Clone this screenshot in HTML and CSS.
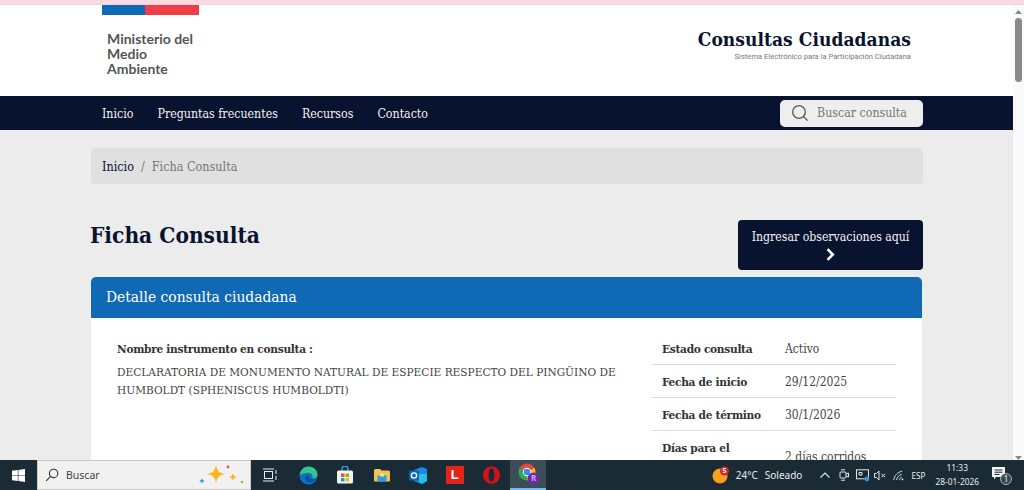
FILE: index.html
```html
<!DOCTYPE html>
<html lang="es">
<head>
<meta charset="utf-8">
<title>Ficha Consulta</title>
<link rel="stylesheet" href="styles.css">
</head>
<body>
<div class="tabstrip"></div>
<div class="viewport">
  <div class="page">
    <header class="site-head">
      <div class="brand">
        <div class="flag"><span class="flag-blue"></span><span class="flag-red"></span></div>
        <div class="ministry">Ministerio del<br>Medio<br>Ambiente</div>
      </div>
      <div class="site-title">
        <div class="site-name">Consultas Ciudadanas</div>
        <div class="site-sub">Sistema Electrónico para la Participación Ciudadana</div>
      </div>
    </header>
    <nav class="nav">
      <div class="nav-links">
        <a>Inicio</a><a>Preguntas frecuentes</a><a>Recursos</a><a>Contacto</a>
      </div>
      <div class="search">
        <svg width="18" height="18" viewBox="0 0 18 18" fill="none" stroke="#555" stroke-width="1.3"><circle cx="8" cy="8" r="6.3"/><path d="M12.6 12.6 16.6 16.6"/></svg>
        <span>Buscar consulta</span>
      </div>
    </nav>
    <main class="content">
      <div class="breadcrumb"><a>Inicio</a><span class="sep">/</span><span class="crumb-now">Ficha Consulta</span></div>
      <div class="title-row">
        <h1>Ficha Consulta</h1>
        <a class="cta">Ingresar observaciones aquí
          <svg class="cta-arrow" width="9" height="13" viewBox="0 0 9 13" fill="none" stroke="#fff" stroke-width="2.6"><path d="M1.5 1.2 6.8 6.5 1.5 11.8"/></svg>
        </a>
      </div>
      <section class="card">
        <div class="card-head">Detalle consulta ciudadana</div>
        <div class="card-body">
          <div class="col-main">
            <div class="field-label">Nombre instrumento en consulta :</div>
            <p class="field-text">DECLARATORIA DE MONUMENTO NATURAL DE ESPECIE RESPECTO DEL PINGÜINO DE HUMBOLDT (SPHENISCUS HUMBOLDTI)</p>
          </div>
          <div class="col-side">
            <div class="row"><b>Estado consulta</b><span>Activo</span></div>
            <div class="row"><b>Fecha de inicio</b><span>29/12/2025</span></div>
            <div class="row"><b>Fecha de término</b><span>30/1/2026</span></div>
            <div class="row row-tall"><b>Días para el término</b><span>2 días corridos</span></div>
          </div>
        </div>
      </section>
    </main>
  </div>
  <div class="scrollbar">
    <svg width="7" height="4" viewBox="0 0 7 4"><path d="M0 4 3.5 0 7 4z" fill="#8a8a8a"/></svg>
    <div class="thumb"></div>
    <svg class="arrow-down" width="7" height="4" viewBox="0 0 7 4"><path d="M0 0 3.5 4 7 0z" fill="#8a8a8a"/></svg>
  </div>
</div>
<footer class="taskbar">
  <div class="start">
    <svg width="13" height="13" viewBox="0 0 13 13" fill="#fff"><path d="M0 1.8 5.8 1v5.2H0zM6.4.9 13 0v6.2H6.4zM0 6.8h5.8V12L0 11.2zM6.4 6.8H13V13l-6.6-.9z"/></svg>
  </div>
  <div class="tb-search">
    <svg width="14" height="14" viewBox="0 0 14 14" fill="none" stroke="#333" stroke-width="1.1"><circle cx="8.6" cy="5.4" r="4.2"/><path d="M5.6 8.4 1.2 12.8"/></svg>
    <span class="tb-search-text">Buscar</span>
    <svg class="sparkles" width="46" height="24" viewBox="0 0 46 24">
      <path d="M18 2c1 5.500 3 8 9 9-6 1-8 3.500-9 9-1-5.500-3-8-9-9 6-1 8-3.500 9-9z" fill="#f9b51d"/>
      <path d="M35 10c.4 2.500 1.500 3.500 4 4-2.500.500-3.600 1.500-4 4-.400-2.500-1.500-3.500-4-4 2.500-.500 3.600-1.500 4-4z" fill="#f9b51d"/>
      <path d="M4 15c.300 1.500 1 2.200 2.800 3-1.800.500-2.500 1.200-2.800 3-.300-1.800-1-2.500-2.800-3 1.800-.800 2.500-1.500 2.800-3z" fill="#2b9fe8"/>
      <circle cx="30" cy="4" r="1.400" fill="#e8583a"/>
      <circle cx="44" cy="19" r="1.300" fill="#8cc63f"/>
    </svg>
  </div>
  <div class="tb-apps">
    <div class="app">
      <svg class="taskview" width="14" height="14" viewBox="0 0 14 14" fill="none" stroke="#e8ecee" stroke-width="1"><rect x="1.500" y="3.500" width="8" height="7"/><path d="M0 1h11M0 13h11M13 2v4M13 8v4"/></svg>
    </div>
    <div class="app">
      <svg width="19" height="19" viewBox="0 0 20 20"><circle cx="10" cy="10" r="9.500" fill="#0c72c4"/><path d="M.6 9.500C1.500 4 5.500.5 10.500.5c5 0 9 4 9 8.500 0 3-3 4.200-5.500 3.500 1.200-2.500-.5-5.300-4-5.300-3.500 0-7 1.200-9.900 2.300z" fill="#36c58a"/><path d="M6.500 12.500c0 3.500 3.500 5.500 6.800 4.700 2.200-.500 4.200-2.200 5-4.200-3.300 1.800-7.800 1.200-8.300-3.200-1.700-.300-3.500.800-3.500 2.700z" fill="#0a4f9e"/></svg>
    </div>
    <div class="app">
      <svg width="18" height="18" viewBox="0 0 18 18"><path d="M6 5V3a3 3 0 0 1 6 0v2" fill="none" stroke="#29a8e0" stroke-width="1.400"/><rect x="1" y="4.500" width="16" height="13" rx="1.500" fill="#f4f4f4"/><rect x="5" y="7.500" width="3.500" height="3.500" fill="#f25022"/><rect x="9.500" y="7.500" width="3.500" height="3.500" fill="#7fba00"/><rect x="5" y="12" width="3.500" height="3.500" fill="#00a4ef"/><rect x="9.500" y="12" width="3.500" height="3.500" fill="#ffb900"/></svg>
    </div>
    <div class="app">
      <svg width="17" height="14" viewBox="0 0 17 14"><path d="M1 2.500A1.500 1.500 0 0 1 2.500 1H7l1.500 1.500h7A1.500 1.500 0 0 1 17 4v8.500a1 1 0 0 1-1 1H2a1 1 0 0 1-1-1z" fill="#f2c44f"/><rect x="4.500" y="7.500" width="9" height="6" fill="#2f9bdc"/><rect x="7" y="5.500" width="4" height="3" fill="#f8e08e"/></svg>
    </div>
    <div class="app">
      <svg width="18" height="17" viewBox="0 0 18 17"><path d="M5 3 13 0l5 2v12l-5 3-8-3z" fill="#1490df"/><path d="M10 7h8v7l-5 3-3-2z" fill="#28c0ea"/><rect x="0" y="3.500" width="10" height="10" rx="1" fill="#0a64ad"/><circle cx="5" cy="8.500" r="2.600" fill="none" stroke="#fff" stroke-width="1.400"/></svg>
    </div>
    <div class="app">
      <div class="app-l">L</div>
    </div>
    <div class="app">
      <svg width="17" height="18" viewBox="0 0 17 18"><ellipse cx="8.500" cy="9" rx="8.500" ry="8.800" fill="#d2121d"/><ellipse cx="8.500" cy="9" rx="3" ry="6.800" fill="#1b2b36"/></svg>
    </div>
    <div class="app app-active">
      <svg class="chrome" width="22" height="22" viewBox="0 0 22 22"><path d="M9 9 1.640 4.750A8.500 8.500 0 0 1 16.360 4.750z" fill="#e8453c"/><path d="M9 9 16.360 4.750A8.500 8.500 0 0 1 9 17.500z" fill="#fbbc05"/><path d="M9 9 9 17.500A8.500 8.500 0 0 1 1.640 4.750z" fill="#34a853"/><circle cx="9" cy="9" r="4.200" fill="#fff"/><circle cx="9" cy="9" r="3.300" fill="#4285f4"/><circle cx="15.500" cy="15.500" r="6" fill="#6d2aa6"/><text x="15.500" y="18.300" class="avatar-letter" text-anchor="middle">R</text></svg>
    </div>
  </div>
  <div class="tray">
    <div class="weather">
      <svg class="sun" width="18" height="18" viewBox="0 0 18 18"><circle cx="8" cy="10" r="7.500" fill="#f6a21d"/><path d="M2 14A7.500 7.500 0 0 0 14 14 8 8 0 0 1 2 14z" fill="#e8701a"/><circle cx="12.500" cy="5" r="4.500" fill="#d8222c"/><text x="12.500" y="7.300" class="badge-num" text-anchor="middle">5</text></svg>
      <span class="temp">24°C</span><span class="cond">Soleado</span>
    </div>
    <svg class="tray-ic chev" width="10" height="6" viewBox="0 0 10 6" fill="none" stroke="#e4e8ea" stroke-width="1.100"><path d="M.5 5.500 5 1l4.500 4.500"/></svg>
    <svg class="tray-ic meet" width="10" height="12" viewBox="0 0 10 12" fill="none" stroke="#e4e8ea" stroke-width="1"><rect x="1" y="3" width="6" height="6" rx="1"/><path d="M7 5l2.500-1v4L7 7M2 .8h4M2 11.200h4"/></svg>
    <svg class="tray-ic scr" width="14" height="13" viewBox="0 0 14 13" fill="none" stroke="#e4e8ea" stroke-width="1"><rect x=".5" y=".8" width="12" height="9"/><path d="M3 3.500h3v2.500H3z"/><circle cx="11" cy="10" r="2.400" fill="#3b8fe0" stroke="none"/></svg>
    <svg class="tray-ic vol" width="12" height="11" viewBox="0 0 12 11" fill="none" stroke="#e4e8ea" stroke-width="1"><path d="M.5 3.500h2L5 1v9L2.500 7.500h-2zM7.500 3.800l3.500 3.500M11 3.800 7.500 7.300"/></svg>
    <svg class="tray-ic wifi" width="11" height="11" viewBox="0 0 12 11" fill="none" stroke="#e4e8ea" stroke-width="1"><path d="M.8 10.500C1.500 5.500 5 1.800 10 .8M3.800 10.500C4.300 7.500 6.300 5 9.500 4.200M6.800 10.500c.3-1.500 1.200-2.700 2.800-3.200"/><circle cx="10.300" cy="9.800" r="1" fill="#e4e8ea" stroke="none"/></svg>
    <span class="lang">ESP</span>
    <div class="clock"><span>11:33</span><span>28-01-2026</span></div>
    <div class="notif">
      <svg width="13" height="13" viewBox="0 0 13 13"><path d="M0 0h13v10H4L2 12.500V10H0z" fill="#f2f4f5"/><path d="M2.500 3h8M2.500 5.200h8M2.500 7.400h5" stroke="#1c2c36"/></svg>
      <span class="notif-count">1</span>
    </div>
  </div>
</footer>
</body>
</html>
```
FILE: styles.css
```css
* { box-sizing: border-box; }
html, body { margin: 0; height: 490px; overflow: hidden; }
body {
  display: flex;
  flex-direction: column;
  width: 1024px;
  font-family: "DejaVu Serif Condensed", "DejaVu Serif", serif;
  background: #fff;
}
a { color: inherit; text-decoration: none; }

.tabstrip { height: 5px; flex: none; background: #fdd9e1; border-bottom: 1px solid #e6d8dc; }
.viewport { flex: 1; display: flex; min-height: 0; }
.page { width: 1013px; flex: none; overflow: hidden; background: #ececec; }

.site-head {
  height: 91px;
  background: #fff;
  display: flex;
  justify-content: space-between;
  padding: 0 102px 0 102px;
}
.flag { display: flex; height: 11px; width: 97px; margin-top: -1px; }
.flag-blue { width: 43px; background: #0f69b4; }
.flag-red { flex: 1; background: #ef3e4a; }
.ministry {
  margin: 16px 0 0 5px;
  font: 700 14px/15px "Lato", "Noto Sans", sans-serif;
  color: #555;
}
.site-title { text-align: right; padding-top: 23px; }
.site-name { font-size: 19px; font-weight: 700; line-height: 23px; color: #08132f; letter-spacing: .05px; }
.site-sub { font: 400 7.600px/9px "Roboto", sans-serif; color: #777; margin-top: 1px; }

.nav {
  height: 34px;
  background: #08132f;
  display: flex;
  align-items: center;
  justify-content: space-between;
  padding: 0 90px 0 102px;
}
.nav-links { display: flex; gap: 24px; padding-top: 1px; font-size: 12.300px; color: #f2f2f2; }
.search {
  width: 143px;
  height: 27px;
  background: #eee;
  border-radius: 5px;
  display: flex;
  align-items: center;
  gap: 8px;
  padding-left: 11px;
  font-size: 12.300px;
  color: #777;
}

.content { padding: 18px 90px 0 91px; }
.breadcrumb {
  height: 36px;
  background: #e0e0e0;
  border-radius: 4px;
  display: flex;
  align-items: center;
  padding: 1px 0 0 11px;
  font-size: 12.500px;
  color: #08132f;
}
.sep { margin: 0 7px; color: #777; }
.crumb-now { color: #777; }
.title-row {
  display: flex;
  justify-content: space-between;
  margin-top: 36px;
  height: 50px;
}
h1 { margin: 0 0 0 -1px; font-size: 22.500px; line-height: 30px; font-weight: 700; color: #08132f; }
.cta {
  width: 185px;
  height: 50px;
  background: #08132f;
  border-radius: 4px;
  color: #f4f4f4;
  font-size: 12.200px;
  line-height: 18px;
  text-align: center;
  padding-top: 8px;
}
.cta-arrow { display: block; margin: 2px auto 0; }

.card { margin-top: 7px; width: 831px; }
.card-head {
  height: 41px;
  background: #0f69b4;
  border-radius: 5px 5px 0 0;
  color: #fff;
  font-size: 15.400px;
  line-height: 41px;
  padding-left: 15px;
}
.card-body { background: #fff; display: flex; padding: 21px 26px 40px; height: 300px; }
.col-main { width: 534px; flex: none; color: #444; }
.field-label { font-size: 11.800px; letter-spacing: -.3px; line-height: 20px; font-weight: 700; color: #333; }
.field-text { margin: 4px 0 0; font-size: 11.750px; line-height: 18px; width: 510px; }
.col-side { width: 245px; margin: -7px 0 0 0; font-size: 12px; color: #444; }
.row { display: flex; height: 33px; align-items: center; border-bottom: 1px solid #ddd; padding: 2px 0 0 11px; }
.row b { width: 123px; flex: none; color: #333; font-size: 11.800px; letter-spacing: -.3px; }
.row-tall { height: 60px; align-items: flex-start; padding-top: 7px; border: 0; line-height: 20px; }
.row-tall b { padding-right: 30px; }
.row-tall span { margin-top: 9px; }

.scrollbar {
  flex: 1;
  background: #fafafa;
  display: flex;
  flex-direction: column;
  align-items: center;
  padding-top: 5px;
}
.thumb { width: 7px; height: 64px; margin-top: 4px; background: #8a8a8a; border-radius: 4px; }
.arrow-down { margin-top: auto; }

.taskbar {
  height: 30px;
  flex: none;
  display: flex;
  background: #1b2b36;
  font-family: "Noto Sans", sans-serif;
  color: #e8ecee;
}
.start { width: 37px; display: flex; align-items: center; justify-content: center; }
.tb-search {
  width: 214px;
  background: #f1f1f1;
  border: 1px solid #c8c8c8;
  display: flex;
  align-items: center;
  padding-left: 7px;
}
.tb-search-text { margin-left: 7px; font-size: 10.500px; color: #444; }
.sparkles { margin-left: auto; margin-right: 6px; }
.tb-apps { display: flex; margin-left: 2.500px; }
.app { width: 36.600px; display: flex; align-items: center; justify-content: center; }
.taskview { margin-right: 4px; }
.chrome { margin-left: 3px; }
.app-active { background: #3d4d58; border-bottom: 2px solid #76b9ed; }
.app-l {
  width: 18px; height: 18px; background: #e3241b; color: #fff;
  font: 700 13px/18px "Liberation Sans", sans-serif; text-align: center;
}
.avatar-letter { font: 700 8px "Noto Sans", sans-serif; fill: #c9a6e8; }
.badge-num { font: 700 7px "Noto Sans", sans-serif; fill: #fff; }

.tray { flex: 1; display: flex; align-items: center; font-size: 10px; padding-left: 166px; }
.weather { display: flex; align-items: center; }
.temp { margin-left: 5.500px; }
.cond { margin-left: 7px; }
.chev { margin-left: 18px; }
.meet { margin-left: 9px; }
.scr { margin-left: 7px; }
.vol { margin-left: 4px; }
.wifi { margin-left: 7px; }
.lang { margin-left: 7px; font-size: 8.200px; }
.clock { display: flex; flex-direction: column; align-items: center; margin-left: 10px; font-size: 8.400px; line-height: 14px; }
.notif { position: relative; margin-left: 13px; width: 20px; height: 24px; display: flex; align-items: flex-start; padding-top: 4px; }
.notif-count {
  position: absolute; left: 8px; top: 10px; width: 12px; height: 12px;
  border-radius: 50%; background: #3a4850; border: 1px solid #aab; font-size: 8px; line-height: 10px; text-align: center;
}
```
